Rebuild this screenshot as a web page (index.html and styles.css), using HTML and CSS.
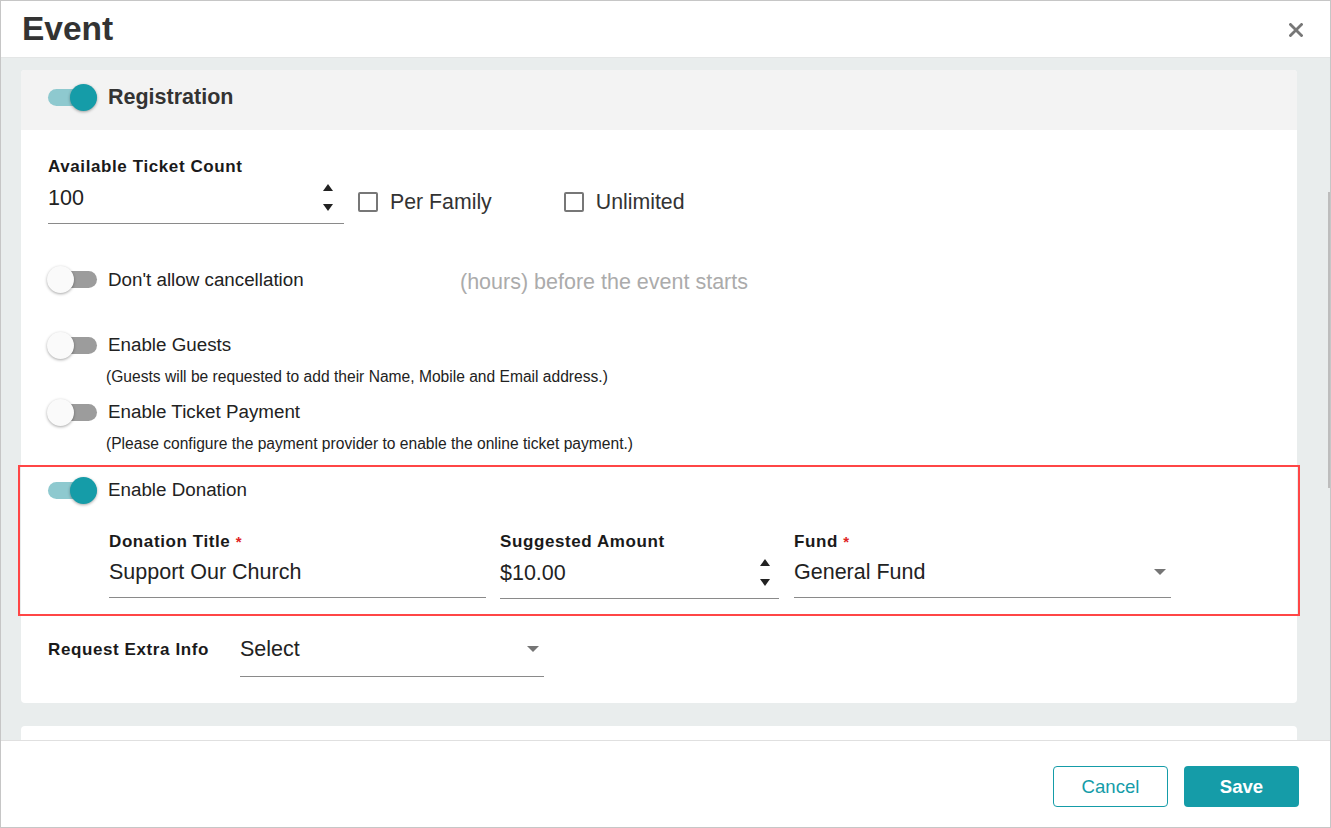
FILE: index.html
```html
<!DOCTYPE html>
<html lang="en">
<head>
  <meta charset="UTF-8" />
  <meta name="viewport" content="width=device-width, initial-scale=1.0"/>
  <title>Event</title>
  <link rel="stylesheet" href="styles.css">
</head>
<body>
  <div class="modal">
    <div class="modal-header">
      <h1>Event</h1>
      <svg class="close" width="14" height="14" viewBox="0 0 14 14">
        <path d="M1.5 1.5 L12.5 12.5 M12.5 1.5 L1.5 12.5" stroke="#777" stroke-width="2.8" stroke-linecap="square"/>
      </svg>
    </div>

    <div class="modal-body">
      <div class="scroll-thumb"></div>

      <div class="card">
        <div class="card-header">
          <div class="switch on"><span class="track"></span><span class="knob"></span></div>
          <span class="card-title">Registration</span>
        </div>

        <div class="card-body">
          <div class="ticket-row">
            <div class="field ticket-field">
              <div class="field-label">Available Ticket Count</div>
              <div class="input-line">
                <span class="value">100</span>
                <span class="spinner">
                  <svg width="10" height="7" viewBox="0 0 10 7"><path d="M5 0 L10 7 L0 7 Z" fill="#222"/></svg>
                  <svg width="10" height="7" viewBox="0 0 10 7"><path d="M0 0 L10 0 L5 7 Z" fill="#222"/></svg>
                </span>
              </div>
            </div>
            <label class="check per-family"><span class="box"></span>Per Family</label>
            <label class="check unlimited"><span class="box"></span>Unlimited</label>
          </div>

          <div class="cancel-row">
            <div class="toggle-row cancel-toggle">
              <div class="switch"><span class="track"></span><span class="knob"></span></div>
              <span class="toggle-label">Don't allow cancellation</span>
            </div>
            <span class="hours">(hours) before the event starts</span>
          </div>

          <div class="toggle-row guests">
            <div class="switch"><span class="track"></span><span class="knob"></span></div>
            <span class="toggle-label">Enable Guests</span>
          </div>
          <div class="note">(Guests will be requested to add their Name, Mobile and Email address.)</div>

          <div class="toggle-row payment">
            <div class="switch"><span class="track"></span><span class="knob"></span></div>
            <span class="toggle-label">Enable Ticket Payment</span>
          </div>
          <div class="note">(Please configure the payment provider to enable the online ticket payment.)</div>

          <div class="highlight">
            <div class="toggle-row">
              <div class="switch on"><span class="track"></span><span class="knob"></span></div>
              <span class="toggle-label">Enable Donation</span>
            </div>

            <div class="donation-fields">
              <div class="field title-field">
                <div class="field-label">Donation Title <span class="req">*</span></div>
                <div class="input-line"><span class="value">Support Our Church</span></div>
              </div>
              <div class="field amount-field">
                <div class="field-label">Suggested Amount</div>
                <div class="input-line">
                  <span class="value">$10.00</span>
                  <span class="spinner">
                    <svg width="10" height="7" viewBox="0 0 10 7"><path d="M5 0 L10 7 L0 7 Z" fill="#222"/></svg>
                    <svg width="10" height="7" viewBox="0 0 10 7"><path d="M0 0 L10 0 L5 7 Z" fill="#222"/></svg>
                  </span>
                </div>
              </div>
              <div class="field fund-field">
                <div class="field-label">Fund <span class="req">*</span></div>
                <div class="input-line">
                  <span class="value">General Fund</span>
                  <svg class="caret" width="12" height="6" viewBox="0 0 12 6"><path d="M0 0 L12 0 L6 6 Z" fill="#757575"/></svg>
                </div>
              </div>
            </div>
          </div>

          <div class="extra-row">
            <div class="extra-label">Request Extra Info</div>
            <div class="select">
              <span class="value">Select</span>
              <svg class="caret" width="12" height="6" viewBox="0 0 12 6"><path d="M0 0 L12 0 L6 6 Z" fill="#757575"/></svg>
            </div>
          </div>
        </div>
      </div>

      <div class="card next"></div>
    </div>

    <div class="modal-footer">
      <button class="btn cancel">Cancel</button>
      <button class="btn save">Save</button>
    </div>
  </div>
</body>
</html>
```

FILE: styles.css
```css
* {
  box-sizing: border-box;
}

body {
  margin: 0;
  font-family: 'Liberation Sans', Arial, sans-serif;
  color: #222;
  background-color: #fff;
}

.modal {
  width: 1331px;
  height: 828px;
  border: 1px solid #c6c6c6;
  display: flex;
  flex-direction: column;
  overflow: hidden;
}

.modal-header {
  flex: none;
  height: 57px;
  display: flex;
  align-items: center;
  justify-content: space-between;
  padding: 0 27px 0 21px;
  border-bottom: 1px solid #e4e6e6;
}

.modal-header h1 {
  margin: 0;
  font-size: 33.5px;
  font-weight: bold;
  color: #333;
}

.close {
  margin-top: 1px;
}

.modal-body {
  flex: 1;
  position: relative;
  background-color: #e9eded;
  padding: 12px 33px 0 20px;
  overflow: hidden;
}

.scroll-thumb {
  position: absolute;
  right: 0;
  top: 134px;
  width: 2px;
  height: 296px;
  background-color: #bdbdbd;
}

.card {
  background-color: #fff;
  border-radius: 4px;
}

.card.next {
  margin-top: 23px;
  height: 80px;
}

.card-header {
  height: 60px;
  display: flex;
  align-items: center;
  gap: 11px;
  padding: 0 0 6px 27px;
  background-color: #f3f3f3;
  border-radius: 4px 4px 0 0;
}

.card-title {
  font-size: 21.5px;
  font-weight: bold;
  color: #333;
}

.card-body {
  padding: 27px 0 26px 27px;
}

/* switches */
.switch {
  position: relative;
  flex: none;
  width: 49px;
  height: 27px;
}

.switch .track {
  position: absolute;
  left: 0;
  top: 5px;
  width: 49px;
  height: 17px;
  border-radius: 9px;
  background-color: #9c9c9c;
}

.switch .knob {
  position: absolute;
  top: 0;
  left: -1px;
  width: 27px;
  height: 27px;
  border-radius: 50%;
  background-color: #fafafa;
  box-shadow: 0 1px 3px rgba(0,0,0,0.35);
}

.switch.on .track {
  background-color: #8ec9cf;
}

.switch.on .knob {
  left: 22px;
  background-color: #159ca8;
}

.toggle-row {
  display: flex;
  align-items: center;
  gap: 11px;
  height: 28px;
}

.toggle-label {
  font-size: 18.8px;
  color: #222;
}

/* fields */
.field-label {
  font-size: 17px;
  font-weight: bold;
  letter-spacing: 0.6px;
  line-height: 20px;
  color: #1a1a1a;
}

.req {
  color: #e02424;
  font-size: 15px;
}

.input-line {
  display: flex;
  align-items: center;
  padding: 7px 0 12px;
  line-height: 26px;
  font-size: 21.5px;
  color: #222;
  border-bottom: 1px solid #8a8a8a;
}

.input-line .value {
  flex: 1;
}

.spinner {
  display: flex;
  flex-direction: column;
  gap: 13px;
  margin-right: 11px;
}

.spinner svg {
  display: block;
}

.caret {
  margin-right: 5px;
}

.ticket-row {
  display: flex;
  align-items: flex-start;
}

.ticket-field {
  width: 296px;
}

.check {
  display: flex;
  align-items: center;
  gap: 12px;
  margin-top: 32px;
  font-size: 21.3px;
  line-height: 26px;
  color: #333;
}

.check .box {
  width: 20px;
  height: 20px;
  border: 2px solid #777;
  border-radius: 2px;
}

.per-family {
  margin-left: 14px;
}

.unlimited {
  margin-left: 72px;
}

.cancel-row {
  display: flex;
  align-items: center;
  margin-top: 40px;
}

.cancel-toggle {
  width: 412px;
}

.hours {
  padding-top: 6px;
  font-size: 21.5px;
  color: #ababab;
}

.guests {
  margin-top: 36px;
}

.payment {
  margin-top: 11px;
}

.note {
  margin: 8px 0 0 58px;
  font-size: 15.6px;
  line-height: 20px;
  color: #222;
}

.highlight {
  margin: 11px -3px 0 -30px;
  padding: 9px 0 15px 28px;
  border: 2px solid #ff4646;
}

.donation-fields {
  display: flex;
  margin: 28px 0 0 61px;
}

.title-field {
  width: 377px;
}

.amount-field {
  width: 279px;
  margin-left: 14px;
}

.amount-field .spinner {
  margin-right: 9px;
}

.fund-field {
  width: 377px;
  margin-left: 15px;
}

.extra-row {
  display: flex;
  align-items: flex-start;
  margin-top: 20px;
}

.extra-label {
  width: 192px;
  font-size: 17px;
  font-weight: bold;
  letter-spacing: 0.6px;
  line-height: 28px;
  color: #1a1a1a;
}

.select {
  width: 304px;
  display: flex;
  align-items: center;
  padding-bottom: 14px;
  line-height: 26px;
  font-size: 21.5px;
  color: #222;
  border-bottom: 1px solid #8a8a8a;
}

.select .value {
  flex: 1;
}

.modal-footer {
  flex: none;
  height: 87px;
  display: flex;
  justify-content: flex-end;
  align-items: flex-start;
  gap: 16px;
  padding: 25px 31px 0 0;
  border-top: 1px solid #e0e0e0;
  background-color: #fff;
}

.btn {
  width: 115px;
  height: 41px;
  border-radius: 4px;
  font-family: 'Liberation Sans', Arial, sans-serif;
  font-size: 18.6px;
  cursor: pointer;
}

.btn.cancel {
  background-color: #fff;
  border: 1px solid #159ca8;
  color: #159ca8;
}

.btn.save {
  background-color: #159ca8;
  border: none;
  color: #fff;
  font-weight: bold;
}
```
